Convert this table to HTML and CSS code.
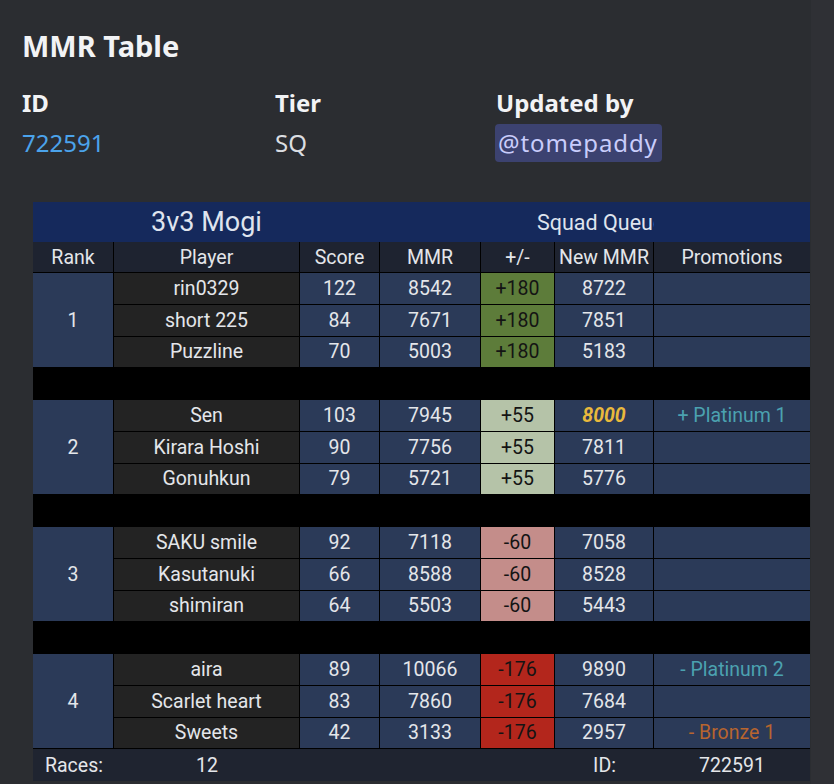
FILE: index.html
```html
<!DOCTYPE html>
<html>
<head>
<meta charset="utf-8">
<link rel="stylesheet" href="styles.css">
</head>
<body>
<div class="embed">
  <div class="embed-title">MMR Table</div>
  <div class="fields">
    <div class="field">
      <div class="field-name">ID</div>
      <div class="field-value link">722591</div>
    </div>
    <div class="field">
      <div class="field-name">Tier</div>
      <div class="field-value">SQ</div>
    </div>
    <div class="field">
      <div class="field-name">Updated by</div>
      <div class="field-value"><span class="mention">@tomepaddy</span></div>
    </div>
  </div>

  <div class="sheet">
    <div class="sheet-title">
      <div class="t-main">3v3 Mogi</div>
      <div class="t-sub"><span>Squad Queue</span></div>
      <div></div>
    </div>
    <div class="grid">
      <div class="h">Rank</div><div class="h">Player</div><div class="h">Score</div><div class="h">MMR</div><div class="h">+/-</div><div class="h">New MMR</div><div class="h">Promotions</div>

      <div class="rank">1</div>
      <div class="p">rin0329</div><div class="b">122</div><div class="b">8542</div><div class="d g1">+180</div><div class="b">8722</div><div class="b"></div>
      <div class="p">short 225</div><div class="b">84</div><div class="b">7671</div><div class="d g1">+180</div><div class="b">7851</div><div class="b"></div>
      <div class="p">Puzzline</div><div class="b">70</div><div class="b">5003</div><div class="d g1">+180</div><div class="b">5183</div><div class="b"></div>
      <div class="sep"></div>

      <div class="rank">2</div>
      <div class="p">Sen</div><div class="b">103</div><div class="b">7945</div><div class="d g2">+55</div><div class="b gold">8000</div><div class="b promo-up">+ Platinum 1</div>
      <div class="p">Kirara Hoshi</div><div class="b">90</div><div class="b">7756</div><div class="d g2">+55</div><div class="b">7811</div><div class="b"></div>
      <div class="p">Gonuhkun</div><div class="b">79</div><div class="b">5721</div><div class="d g2">+55</div><div class="b">5776</div><div class="b"></div>
      <div class="sep"></div>

      <div class="rank">3</div>
      <div class="p">SAKU smile</div><div class="b">92</div><div class="b">7118</div><div class="d r1">-60</div><div class="b">7058</div><div class="b"></div>
      <div class="p">Kasutanuki</div><div class="b">66</div><div class="b">8588</div><div class="d r1">-60</div><div class="b">8528</div><div class="b"></div>
      <div class="p">shimiran</div><div class="b">64</div><div class="b">5503</div><div class="d r1">-60</div><div class="b">5443</div><div class="b"></div>
      <div class="sep"></div>

      <div class="rank">4</div>
      <div class="p">aira</div><div class="b">89</div><div class="b">10066</div><div class="d r2">-176</div><div class="b">9890</div><div class="b promo-up">- Platinum 2</div>
      <div class="p">Scarlet heart</div><div class="b">83</div><div class="b">7860</div><div class="d r2">-176</div><div class="b">7684</div><div class="b"></div>
      <div class="p">Sweets</div><div class="b">42</div><div class="b">3133</div><div class="d r2">-176</div><div class="b">2957</div><div class="b promo-down">- Bronze 1</div>
    </div>
    <div class="sheet-foot">
      <div class="f-left">Races:</div>
      <div class="f-c">12</div>
      <div></div><div></div><div></div>
      <div class="f-c">ID:</div>
      <div class="f-c">722591</div>
    </div>
  </div>
</div>
</body>
</html>
```

FILE: styles.css
```css
html, body {
  margin: 0;
  padding: 0;
}
body {
  background: #2f3035;
  width: 834px;
  height: 784px;
  overflow: hidden;
}
.embed {
  width: 811px;
  height: 784px;
  background: #2b2d31;
  padding: 29px 0 0 22px;
  box-sizing: border-box;
  font-family: "Noto Sans", "Open Sans", sans-serif;
}
.embed-title {
  font-size: 29px;
  line-height: 34px;
  font-weight: 700;
  color: #f2f3f5;
}
.fields {
  display: grid;
  grid-template-columns: 253px 221px 1fr;
  margin-top: 25px;
}
.field-name {
  font-size: 24px;
  line-height: 30px;
  font-weight: 700;
  color: #f2f3f5;
}
.field-value {
  font-size: 24px;
  line-height: 30px;
  margin-top: 10px;
  color: #dbdee1;
}
.field-value.link {
  color: #4ba3eb;
}
.mention {
  display: inline-block;
  background: #3c4270;
  color: #c9cdfb;
  border-radius: 4px;
  padding: 4px 4px 4px 3px;
  margin: -4px 0 0 -1px;
  vertical-align: top;
  line-height: 30px;
  letter-spacing: 0.9px;
}

.sheet {
  width: 777px;
  margin: 40px 0 0 11px;
  font-family: "Roboto", "Liberation Sans", sans-serif;
  font-size: 19.5px;
  color: #e4e6ea;
}
.sheet-title {
  display: grid;
  grid-template-columns: 347px 274px 156px;
  height: 40px;
  background: #15295c;
  color: #dfe4ee;
}
.t-main {
  font-size: 27px;
  display: flex;
  align-items: center;
  justify-content: center;
}
.t-sub {
  font-size: 21.5px;
  overflow: hidden;
  white-space: nowrap;
  display: flex;
  align-items: center;
  padding-left: 157px;
}
.grid {
  display: grid;
  grid-template-columns: 80px 185px 79px 100px 73px 98px 156px;
  grid-template-rows: 30px;
  grid-auto-rows: 30.75px;
  gap: 1px;
  background: #000;
  padding-bottom: 1px;
}
.grid > div {
  display: flex;
  align-items: center;
  justify-content: center;
  white-space: nowrap;
}
.h {
  background: #1e2330;
}
.rank {
  grid-row: span 3;
  background: #2b3a58;
}
.p {
  background: #232323;
}
.b {
  background: #2b3a58;
}
.d {
  color: #141414;
}
.g1 { background: #5d7c3a; }
.g2 { background: #b5c3a8; }
.r1 { background: #c48d8a; }
.r2 { background: #b3261c; }
.gold {
  color: #e9b93c;
  font-weight: 700;
  font-style: italic;
}
.promo-up { color: #4ba2b0; }
.promo-down { color: #b8652f; }
.sep {
  grid-column: 1 / -1;
  background: #000;
}
.sheet-foot {
  display: grid;
  grid-template-columns: 81px 186px 80px 101px 74px 99px 156px;
  height: 32px;
  background: #1f2430;
}
.sheet-foot > div {
  display: flex;
  align-items: center;
  justify-content: center;
}
.sheet-foot > .f-left {
  justify-content: flex-start;
  padding-left: 12px;
}
```
